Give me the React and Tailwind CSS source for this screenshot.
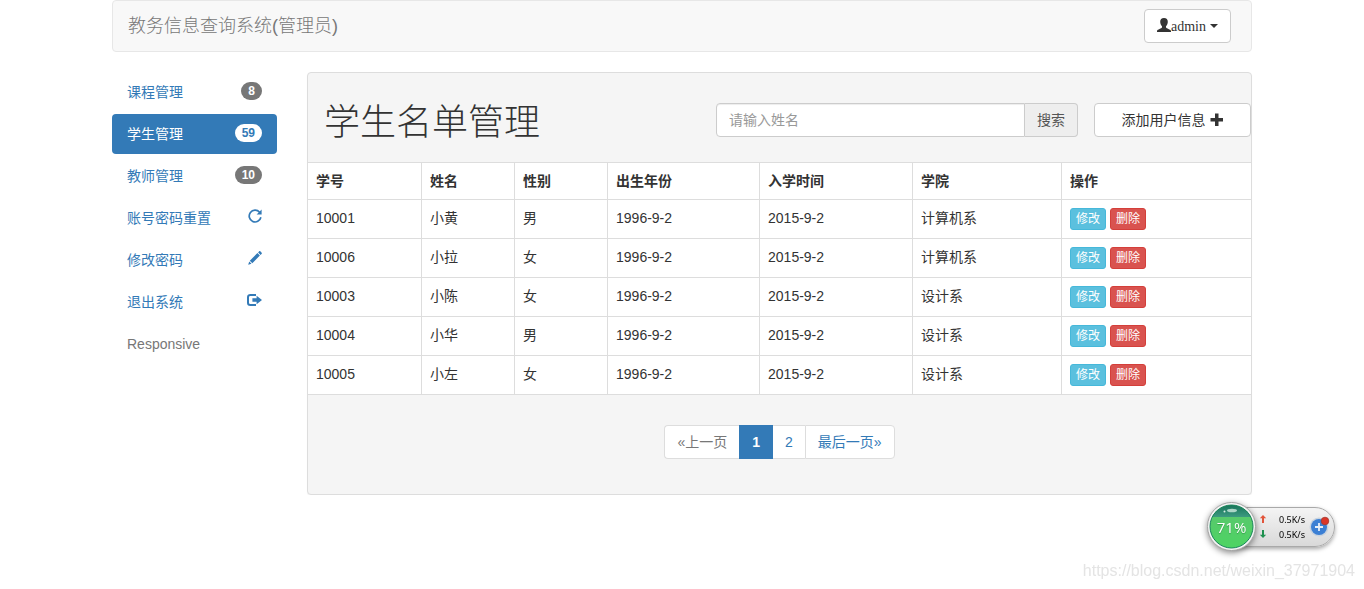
import React from "react";

const students = [
  { id: "10001", name: "小黄", gender: "男", born: "1996-9-2", enrolled: "2015-9-2", college: "计算机系" },
  { id: "10006", name: "小拉", gender: "女", born: "1996-9-2", enrolled: "2015-9-2", college: "计算机系" },
  { id: "10003", name: "小陈", gender: "女", born: "1996-9-2", enrolled: "2015-9-2", college: "设计系" },
  { id: "10004", name: "小华", gender: "男", born: "1996-9-2", enrolled: "2015-9-2", college: "设计系" },
  { id: "10005", name: "小左", gender: "女", born: "1996-9-2", enrolled: "2015-9-2", college: "设计系" },
];

function UserIcon() {
  return (
    <svg className="h-4 w-[14px]" viewBox="0 0 14 16" fill="currentColor" aria-hidden="true">
      <path d="M7 0C4.500 0 3.100 1.500 3.200 3.900c.1 1.900.9 3.500 1.800 4.400v1.300c-.3.900-4.600 1.900-5 3.300V14h14v-1.100c-.4-1.400-4.700-2.400-5-3.300V8.300c.9-.9 1.700-2.500 1.800-4.400C10.900 1.500 9.500 0 7 0z" />
    </svg>
  );
}

function PlusIcon() {
  return (
    <svg className="size-[14px]" viewBox="0 0 14 14" fill="currentColor" aria-hidden="true">
      <path d="M5 .5h3.500v4.500H13v3.500H8.500V13H5V8.500H.5V5H5z" />
    </svg>
  );
}

function RefreshIcon() {
  return (
    <svg className="size-[14px]" viewBox="0 0 14 14" aria-hidden="true">
      <path d="M11.600 3.200A5.900 5.900 0 1 0 12.900 8.300" fill="none" stroke="currentColor" strokeWidth="1.700" />
      <path d="M13.600.4v5.200H8.600z" fill="currentColor" />
    </svg>
  );
}

function PencilIcon() {
  return (
    <svg className="size-[14px]" viewBox="0 0 14 14" fill="currentColor" aria-hidden="true">
      <path d="M11.200.3c.3-.3.800-.3 1.100 0l1.400 1.400c.3.300.3.800 0 1.100l-1.100 1.100L10.100 1.400zM9.400 2.100l2.500 2.500-7.600 7.600-2.500-2.500zM1.200 10.500l2.300 2.300L.2 13.800z" />
    </svg>
  );
}

function LogoutIcon() {
  return (
    <svg className="h-[14px] w-[15px]" viewBox="0 0 15 14" aria-hidden="true">
      <path d="M9 1.900H3.300A2.300 2.300 0 0 0 1 4.200v5.600a2.300 2.300 0 0 0 2.300 2.300H9" fill="none" stroke="currentColor" strokeWidth="2" />
      <path d="M9.600 2.700 15 7l-5.400 4.300V8.700H5.400V5.300h4.200z" fill="currentColor" />
    </svg>
  );
}

function Badge({ active, children }) {
  return (
    <span
      className={
        "rounded-[10px] px-[7px] py-[3px] text-[12px] leading-[12px] font-bold " +
        (active ? "bg-white text-[#337ab7]" : "bg-[#777] text-white")
      }
    >
      {children}
    </span>
  );
}

const menu = [
  { label: "课程管理", extra: <Badge>8</Badge> },
  { label: "学生管理", active: true, extra: <Badge active>59</Badge> },
  { label: "教师管理", extra: <Badge>10</Badge> },
  { label: "账号密码重置", icon: true, extra: <RefreshIcon /> },
  { label: "修改密码", icon: true, extra: <PencilIcon /> },
  { label: "退出系统", icon: true, extra: <LogoutIcon /> },
];

function Sidebar() {
  return (
    <nav className="w-[165px] shrink-0">
      <ul className="flex flex-col gap-[2px]">
        {menu.map((item) => (
          <li key={item.label}>
            <a
              href="#"
              className={
                "flex items-start justify-between rounded-[4px] px-[15px] py-[10px] leading-[20px] " +
                (item.active ? "bg-[#337ab7] text-white" : "text-[#337ab7]")
              }
            >
              <span>{item.label}</span>
              {item.icon ? <span className="pt-px">{item.extra}</span> : item.extra}
            </a>
          </li>
        ))}
        <li className="px-[15px] py-[10px] text-[#777]">Responsive</li>
      </ul>
    </nav>
  );
}

const th = "border-b border-[#ddd] p-2 text-left font-bold";
const td = "border-b border-[#ddd] p-2 align-top";
const rule = " border-r";
const action = "h-[22px] rounded-[3px] border px-[5px] text-[12px] leading-[20px] text-white";

function StudentTable() {
  return (
    <table className="w-full table-fixed border-separate border-spacing-0 border-t border-[#ddd] bg-white">
      <colgroup>
        <col className="w-[12.1%]" />
        <col className="w-[9.86%]" />
        <col className="w-[9.86%]" />
        <col className="w-[16.12%]" />
        <col className="w-[16.22%]" />
        <col className="w-[15.8%]" />
        <col />
      </colgroup>
      <thead>
        <tr>
          <th className={th + rule}>学号</th>
          <th className={th + rule}>姓名</th>
          <th className={th + rule}>性别</th>
          <th className={th + rule}>出生年份</th>
          <th className={th + rule}>入学时间</th>
          <th className={th + rule}>学院</th>
          <th className={th}>操作</th>
        </tr>
      </thead>
      <tbody>
        {students.map((s) => (
          <tr key={s.id}>
            <td className={td + rule}>{s.id}</td>
            <td className={td + rule}>{s.name}</td>
            <td className={td + rule}>{s.gender}</td>
            <td className={td + rule}>{s.born}</td>
            <td className={td + rule}>{s.enrolled}</td>
            <td className={td + rule}>{s.college}</td>
            <td className={td}>
              <div className="flex gap-1">
                <button type="button" className={action + " border-[#46b8da] bg-[#5bc0de]"}>修改</button>
                <button type="button" className={action + " border-[#d43f3a] bg-[#d9534f]"}>删除</button>
              </div>
            </td>
          </tr>
        ))}
      </tbody>
    </table>
  );
}

function Pagination() {
  return (
    <nav aria-label="分页" className="flex justify-center pt-[30px] pb-[35px]">
      <ul className="flex text-[#337ab7]">
        <li className="rounded-l-[4px] border border-r-0 border-[#ddd] bg-white px-3 py-[6px] text-[#777]">«上一页</li>
        <li>
          <a href="#" aria-current="page" className="block border border-[#337ab7] bg-[#337ab7] px-3 py-[6px] font-bold text-white">1</a>
        </li>
        <li>
          <a href="#" className="block border-y border-[#ddd] bg-white px-3 py-[6px]">2</a>
        </li>
        <li>
          <a href="#" className="block rounded-r-[4px] border border-[#ddd] bg-white px-3 py-[6px]">最后一页»</a>
        </li>
      </ul>
    </nav>
  );
}

function SpeedMonitor() {
  return (
    <div className="fixed right-[29px] bottom-[38px] flex items-center">
      <div className="z-10 grid size-[49px] place-items-center rounded-full drop-shadow-[0_2px_3px_rgba(0,0,0,0.45)]">
        <svg className="col-start-1 row-start-1 size-[49px]" viewBox="0 0 49 49" aria-hidden="true">
          <defs>
            <linearGradient id="liquid" x1="0" y1="0" x2="0" y2="1">
              <stop offset="0" stopColor="#5cc470" />
              <stop offset="1" stopColor="#4cd562" />
            </linearGradient>
            <linearGradient id="glass" x1="0" y1="0" x2="0" y2="1">
              <stop offset="0" stopColor="#0f6a50" />
              <stop offset="1" stopColor="#3c9a80" />
            </linearGradient>
            <clipPath id="orb">
              <circle cx="24.500" cy="24.500" r="21.500" />
            </clipPath>
          </defs>
          <circle cx="24.500" cy="24.500" r="24" fill="#f4f4f4" stroke="#a5a5a5" />
          <g clipPath="url(#orb)">
            <rect width="49" height="49" fill="url(#liquid)" />
            <rect width="49" height="15" fill="url(#glass)" />
          </g>
          <circle cx="24.500" cy="24.500" r="21.500" fill="none" stroke="#17845a" />
          <ellipse cx="25" cy="8.500" rx="5" ry="1.800" fill="#d8f0e6" opacity=".75" />
          <circle cx="17.500" cy="9.500" r="1" fill="#d8f0e6" />
        </svg>
        <span className="col-start-1 row-start-1 font-['Open_Sans',sans-serif] text-[15px] leading-[20px] text-white [text-shadow:0_1px_1px_rgba(0,80,30,0.4)]">
          71%
        </span>
      </div>
      <div className="-ml-6 flex h-10 items-center rounded-r-[20px] border border-[#a9a9a9] bg-linear-to-b from-[#f4f4f4] to-[#d9d9d9] pr-1 pl-[26px] shadow-[0_2px_4px_rgba(0,0,0,0.35)]">
        <div className="grid grid-cols-[8px_auto] items-center gap-x-3 font-['Noto_Sans',sans-serif] text-[9px] leading-[15px] text-black">
          <svg className="size-2" viewBox="0 0 8 8" aria-hidden="true">
            <path d="M4 0l3.200 3.200H5V8H3V3.200H.8z" fill="#e2553b" />
          </svg>
          <span>0.5K/s</span>
          <svg className="size-2" viewBox="0 0 8 8" aria-hidden="true">
            <path d="M4 8L.8 4.800H3V0h2v4.800h2.200z" fill="#1f9150" />
          </svg>
          <span>0.5K/s</span>
        </div>
        <svg className="ml-1 size-[21px]" viewBox="0 0 21 21" aria-hidden="true">
          <circle cx="10" cy="11" r="9.500" fill="#c9d3de" />
          <circle cx="10" cy="11" r="8" fill="#3b7fd4" />
          <path d="M9.100 7h1.800v3.100H14v1.800h-3.100V15H9.100v-3.100H6v-1.800h3.100z" fill="#e6eef8" />
          <circle cx="16" cy="5" r="3.800" fill="#dc3528" stroke="#a3382f" strokeWidth=".8" />
        </svg>
      </div>
    </div>
  );
}

export default function App() {
  return (
    <div className="bg-white px-4 font-['Liberation_Sans','Noto_Sans_CJK_SC',sans-serif] text-[14px] leading-[20px] text-[#333]">
      <div className="mx-auto max-w-[1140px]">
        <header className="mb-5 flex h-[52px] items-center justify-between rounded-[4px] border border-[#e7e7e7] bg-[#f8f8f8] pr-5 pl-[15px]">
          <a href="#" className="text-[18px] font-light text-[#777]">教务信息查询系统(管理员)</a>
          <button
            type="button"
            className="flex h-[34px] items-center rounded-[4px] border border-[#ccc] bg-white px-3 font-['Liberation_Serif',serif]"
          >
            <UserIcon />
            <span className="pt-[2px]">admin</span>
            <svg className="ml-1 h-1 w-2" viewBox="0 0 8 4" fill="currentColor" aria-hidden="true">
              <path d="M0 0h8L4 4z" />
            </svg>
          </button>
        </header>

        <div className="flex items-start gap-[30px]">
          <Sidebar />
          <main className="min-w-0 flex-1 rounded-[4px] border border-[#ddd] bg-[#f5f5f5] shadow-[0_1px_1px_rgba(0,0,0,0.05)]">
            <div className="flex items-start gap-4 pt-[30px] pb-[19px] pl-4">
              <h1 className="flex-1 text-[36px] leading-[40px] font-light whitespace-nowrap">学生名单管理</h1>
              <form className="flex h-[34px] w-[362px]" onSubmit={(e) => e.preventDefault()}>
                <input
                  type="text"
                  aria-label="请输入姓名"
                  placeholder="请输入姓名"
                  className="min-w-0 flex-1 rounded-l-[4px] border border-[#ccc] bg-white px-3 shadow-[inset_0_1px_1px_rgba(0,0,0,0.075)] placeholder:text-[#999]"
                />
                <button type="submit" className="rounded-r-[4px] border border-l-0 border-[#ccc] bg-[#eee] px-3 text-[#555]">
                  搜索
                </button>
              </form>
              <button
                type="button"
                className="flex h-[34px] w-[157px] items-center justify-center gap-1 rounded-[4px] border border-[#ccc] bg-white"
              >
                <span>添加用户信息</span>
                <PlusIcon />
              </button>
            </div>
            <StudentTable />
            <Pagination />
          </main>
        </div>
      </div>

      <SpeedMonitor />
      <p className="fixed right-[9px] bottom-2 text-[16px] text-[#e4e4e4]">https://blog.csdn.net/weixin_37971904</p>
    </div>
  );
}
